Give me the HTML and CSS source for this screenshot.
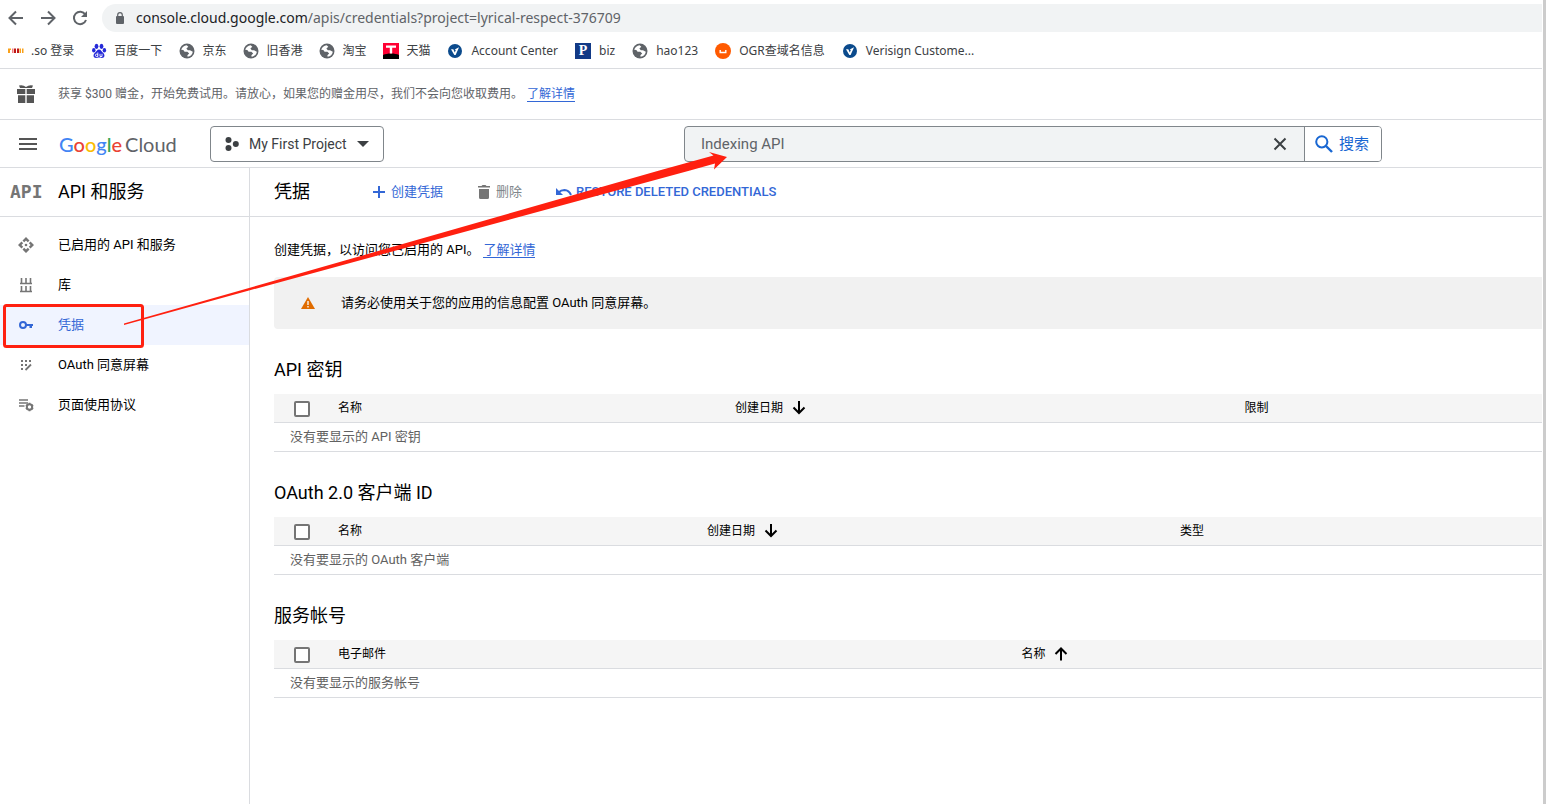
FILE: index.html
```
<!DOCTYPE html>
<html lang="zh-CN">
<head>
<meta charset="utf-8">
<title>凭据 – API 和服务</title>
<link rel="stylesheet" href="styles.css">
</head>
<body>
<svg class="defs" aria-hidden="true">
  <symbol id="globe" viewBox="0 0 16 16">
    <circle cx="8" cy="8" r="7.5" fill="#5f6368"/>
    <path d="M2.200 6.800C3 4.200 5 2.500 7.600 2.200L9.300 3.800 7.400 5.600 8.800 7.200H11L13.800 8.700C13.600 11.200 11.400 13.500 8.600 13.800L8.400 12.200 10.200 10.500 8.400 8.700H5.600L4.300 7z" fill="#fff"/>
    <path d="M9.500 2.400C12 3 13.500 4.800 13.800 7L11.600 6.200 9.700 6 9.200 5.200 10.400 4.100z" fill="#5f6368"/>
  </symbol>
  <symbol id="verisign" viewBox="0 0 16 16">
    <circle cx="8" cy="8" r="7" fill="#0b4a8c"/>
    <path d="M4 6.200H6.300L7.800 9.500 8.800 7 7.700 6.500 12 4.300 11.300 6 8.600 12H7.300z" fill="#fff"/>
  </symbol>
  <symbol id="down" viewBox="0 0 14 14"><path d="M7 0V12M1.500 6.500 7 12 12.500 6.500" fill="none" stroke="#000" stroke-width="2"/></symbol>
  <symbol id="up" viewBox="0 0 14 14"><path d="M7 13.500V2M1.500 7 7 1.500 12.500 7" fill="none" stroke="#000" stroke-width="2"/></symbol>
</svg>
<div class="window">
  <div class="browser">
    <div class="address-row">
      <button class="nav-btn" aria-label="后退"><svg width="16" height="16" viewBox="0 0 16 16"><path d="M15 8H2M8 1.500 1.500 8 8 14.500" fill="none" stroke="#5f6368" stroke-width="2"/></svg></button>
      <button class="nav-btn" aria-label="前进"><svg width="16" height="16" viewBox="0 0 16 16"><path d="M1 8H14M8 1.500 14.500 8 8 14.500" fill="none" stroke="#5f6368" stroke-width="2"/></svg></button>
      <button class="nav-btn" aria-label="重新加载"><svg width="16" height="16" viewBox="0 0 16 16"><path d="M13.300 4.500A6.200 6.200 0 1 0 14 10" fill="none" stroke="#5f6368" stroke-width="2"/><path d="M15 1V7H9z" fill="#5f6368"/></svg></button>
      <div class="omnibox">
        <svg width="10" height="12" viewBox="0 0 10 12"><rect x="1" y="4" width="8" height="8" rx="1" fill="#5f6368"/><path d="M2.700 5V3a2.300 2.300 0 0 1 4.600 0V5" fill="none" stroke="#5f6368" stroke-width="1.200"/></svg>
        <span class="url"><span class="host">console.cloud.google.com</span>/apis/credentials?project=lyrical-respect-376709</span>
      </div>
    </div>
    <nav class="bookmarks" aria-label="书签">
      <a href="#"><svg width="16" height="16" viewBox="0 0 16 16"><path d="M0 5.500H3V7H2V10H0z" fill="#f9a11b"/><path d="M4 5.500H5.500V10H4z" fill="#f08080"/><path d="M6 5.500H8V10H6zM9 5.500H11V10H9z" fill="#c01818"/><path d="M11.500 5.500H13V10H11.500zM14 5.500H15.500V10H14z" fill="#f9a11b"/></svg>.so 登录</a>
      <a href="#"><svg width="16" height="16" viewBox="0 0 16 16" fill="#2529d8"><ellipse cx="5.500" cy="3.300" rx="1.900" ry="2.600"/><ellipse cx="10.500" cy="3.300" rx="1.900" ry="2.600"/><ellipse cx="2.800" cy="7.300" rx="1.700" ry="2.200"/><ellipse cx="13.400" cy="7.300" rx="1.700" ry="2.200"/><path d="M8 6.500C10 6.500 10.500 8.500 12 9.800 14.500 12 13.500 15 11 15 9.500 15 9 14.600 8 14.600S6.500 15 5 15C2.500 15 1.500 12 4 9.800 5.500 8.500 6 6.500 8 6.500z"/><path d="M6.800 9.500V13.500H5.600A1.200 1.200 0 1 1 6.800 12.300M9 10.800V13.500H11V10.800" fill="none" stroke="#fff" stroke-width=".9"/></svg>百度一下</a>
      <a href="#"><svg width="16" height="16"><use href="#globe"/></svg>京东</a>
      <a href="#"><svg width="16" height="16"><use href="#globe"/></svg>旧香港</a>
      <a href="#"><svg width="16" height="16"><use href="#globe"/></svg>淘宝</a>
      <a href="#"><svg width="16" height="16" viewBox="0 0 16 16"><path fill="#ff0033" d="M0 0h16v12H0z"/><path d="M0 12C4 10 12 10 16 12V16H0z"/><path d="M3 2.500H13V4.700H9.200V10.500H6.800V4.700H3z" fill="#fff"/></svg>天猫</a>
      <a href="#"><svg width="16" height="16"><use href="#verisign"/></svg>Account Center</a>
      <a href="#"><span class="fav-p" aria-hidden="true">P</span>biz</a>
      <a href="#"><svg width="16" height="16"><use href="#globe"/></svg>hao123</a>
      <a href="#"><svg width="16" height="16" viewBox="0 0 16 16"><circle cx="8" cy="8" r="8" fill="#ff5a00"/><path d="M5.200 7V9.500H10.800V7" fill="none" stroke="#fff" stroke-width="1.400"/></svg>OGR查域名信息</a>
      <a href="#"><svg width="16" height="16"><use href="#verisign"/></svg>Verisign Custome...</a>
    </nav>
  </div>

  <div class="promo">
    <svg class="promo-icon" width="18" height="18" viewBox="0 0 18 18" fill="#555"><path d="M0 4H8.300V9H0zM9.700 4H18V9H9.700zM1 10.300H8.300V18H1zM9.700 10.300H17V18H9.700z"/><path d="M2 .5Q6 -.5 9 2 12 -.5 16 .5L15 3H3z"/></svg>
    <p>获享 $300 赠金，开始免费试用。请放心，如果您的赠金用尽，我们不会向您收取费用。<a href="#">了解详情</a></p>
  </div>

  <header class="topbar">
    <button class="menu" aria-label="导航菜单"><svg width="18" height="12" viewBox="0 0 18 12"><path d="M0 1H18M0 6H18M0 11H18" stroke="#555" stroke-width="2"/></svg></button>
    <a class="logo" href="#" aria-label="Google Cloud"><span class="google"><span class="b">G</span><span class="r">o</span><span class="y">o</span><span class="b">g</span><span class="g">l</span><span class="r">e</span></span><span>Cloud</span></a>
    <button class="project"><svg width="14" height="14" viewBox="0 0 14 14" fill="#3c4043"><circle cx="3.500" cy="3" r="3"/><circle cx="3.500" cy="11" r="3"/><circle cx="10.800" cy="7" r="3"/></svg><span>My First Project</span><svg width="12" height="6" viewBox="0 0 12 6"><path d="M0 0H12L6 6z" fill="#3c4043"/></svg></button>
    <form class="search">
      <input type="text" value="Indexing API" aria-label="搜索资源">
      <button class="clear" type="button" aria-label="清除"><svg width="14" height="14" viewBox="0 0 14 14"><path d="M1.500 1.500 12.500 12.500M12.500 1.500 1.500 12.500" stroke="#3c4043" stroke-width="2"/></svg></button>
      <button class="go" type="button"><svg width="18" height="18" viewBox="0 0 18 18" fill="none" stroke="#1967d2" stroke-width="2"><circle cx="6.800" cy="6.800" r="5.600"/><path d="M11 11 17 17" stroke-width="2.400"/></svg>搜索</button>
    </form>
  </header>

  <div class="body">
    <aside class="sidebar">
      <div class="side-head"><span class="api-mark" aria-hidden="true">API</span><h2>API 和服务</h2></div>
      <nav class="side-nav">
        <a href="#"><svg width="16" height="16" viewBox="0 0 16 16" fill="#757575"><path d="M8 0 11.500 3.500 9.800 5.200 8 3.400 6.200 5.200 4.500 3.500zM8 16 4.500 12.500 6.200 10.800 8 12.600 9.800 10.800 11.500 12.500zM0 8 3.500 4.500 5.200 6.200 3.400 8 5.200 9.800 3.500 11.500zM16 8 12.500 11.500 10.800 9.800 12.600 8 10.800 6.200 12.500 4.500z"/><circle cx="8" cy="8" r="1.300"/></svg>已启用的 API 和服务</a>
        <a href="#"><svg width="16" height="16" viewBox="0 0 16 16"><path d="M2 6.500H14M2 14.500H14M3.500 1V6M8 1V6M12.500 1V6M3.500 9V14M8 9V14M12.500 9V14" stroke="#757575" stroke-width="1.600"/></svg>库</a>
        <a href="#" class="current" aria-current="page"><svg width="16" height="16" viewBox="0 0 16 16"><circle cx="5" cy="8" r="3" fill="none" stroke="#3367d6" stroke-width="2"/><path d="M8 7H15V9H14V11H11.500V9H8z" fill="#3367d6"/></svg>凭据</a>
        <a href="#"><svg width="16" height="16" viewBox="0 0 16 16"><path d="M3 3h2v2H3zM7 3h2v2H7zM11 3h2v2H11zM3 7h2v2H3zM7 7h2v2H7zM3 11h2v2H3z" fill="#757575"/><path d="M7.500 13 13 7.500" stroke="#757575" stroke-width="1.800"/></svg>OAuth 同意屏幕</a>
        <a href="#"><svg width="16" height="16" viewBox="0 0 16 16"><path d="M1 3H10M1 6H10M1 9H6.500" stroke="#757575" stroke-width="1.400"/><circle cx="11.500" cy="10" r="2.700" fill="none" stroke="#757575" stroke-width="2"/><path d="M11.500 5.800V7.500M11.500 12.500V14.200M7.900 7.900 9.300 8.800M13.700 11.200 15.100 12.100M15.100 7.900 13.700 8.800M9.300 11.200 7.900 12.100" stroke="#757575" stroke-width="1.800"/></svg>页面使用协议</a>
      </nav>
    </aside>

    <main class="main">
      <div class="toolbar">
        <h1>凭据</h1>
        <button class="tool create"><svg width="12" height="12" viewBox="0 0 12 12"><path d="M6 0V12M0 6H12" stroke="#3367d6" stroke-width="2"/></svg>创建凭据</button>
        <button class="tool delete" disabled><svg width="12" height="14" viewBox="0 0 12 14" fill="#757575"><path d="M0 1H3.500L4.500 0H7.500L8.500 1H12V2.600H0zM1 4H11V12.500Q11 14 9.500 14H2.500Q1 14 1 12.500z"/></svg>删除</button>
        <button class="tool restore"><svg width="16" height="12" viewBox="0 0 16 12"><path d="M0 2V9H7z" fill="#3367d6"/><path d="M2.500 6.500Q5 4 8.500 4 13 4.200 15 9" fill="none" stroke="#3367d6" stroke-width="2"/></svg>RESTORE DELETED CREDENTIALS</button>
      </div>
      <div class="content">
        <p class="intro">创建凭据，以访问您已启用的 API。<a href="#">了解详情</a></p>
        <div class="notice"><svg width="14" height="12" viewBox="0 0 14 12"><path d="M7 0 14 12H0z" fill="#e06c00"/><path d="M7 4V8M7 9V10.400" stroke="#fff" stroke-width="1.300"/></svg><span>请务必使用关于您的应用的信息配置 OAuth 同意屏幕。</span></div>

        <section>
          <h3>API 密钥</h3>
          <table class="keys">
            <colgroup><col class="pick"><col class="first"><col class="second"><col></colgroup>
            <thead><tr><th class="check"><input type="checkbox" aria-label="选择所有 API 密钥"></th><th>名称</th><th><span class="sort">创建日期<svg width="14" height="14"><use href="#down"/></svg></span></th><th>限制</th></tr></thead>
            <tbody><tr><td colspan="4">没有要显示的 API 密钥</td></tr></tbody>
          </table>
        </section>
        <section>
          <h3>OAuth 2.0 客户端 ID</h3>
          <table class="clients">
            <colgroup><col class="pick"><col class="first"><col class="second"><col></colgroup>
            <thead><tr><th class="check"><input type="checkbox" aria-label="选择所有客户端"></th><th>名称</th><th><span class="sort">创建日期<svg width="14" height="14"><use href="#down"/></svg></span></th><th>类型</th></tr></thead>
            <tbody><tr><td colspan="4">没有要显示的 OAuth 客户端</td></tr></tbody>
          </table>
        </section>
        <section>
          <h3>服务帐号</h3>
          <table class="accounts">
            <colgroup><col class="pick"><col class="first"><col></colgroup>
            <thead><tr><th class="check"><input type="checkbox" aria-label="选择所有服务帐号"></th><th>电子邮件</th><th><span class="sort">名称<svg width="14" height="14"><use href="#up"/></svg></span></th></tr></thead>
            <tbody><tr><td colspan="3">没有要显示的服务帐号</td></tr></tbody>
          </table>
        </section>
      </div>
    </main>
  </div>
</div>
<svg class="markup" width="740" height="360" viewBox="0 0 740 360" aria-hidden="true">
  <rect x="4.500" y="305.500" width="138" height="41" rx="2" fill="none" stroke="#ff2010" stroke-width="3"/>
  <path d="M124 323.500 249 288 661 170 713.500 155.500 709 152 727 157 714 169.500 715 163.500 690 170.500 249 290.500 124 325z" fill="#ff2010"/>
</svg>
</body>
</html>
```
FILE: styles.css
```
* { box-sizing: border-box; }

body {
  margin: 0;
  background: #fff;
  color: #000;
  font: 13px/20px Roboto, "Noto Sans CJK SC", sans-serif;
}

h1, h2, h3, p { margin: 0; font-weight: 400; }
a { text-decoration: none; color: inherit; }
svg { flex: none; display: block; }

button {
  display: flex;
  align-items: center;
  padding: 0;
  border: 0;
  background: none;
  font: inherit;
  color: inherit;
}

.defs { position: absolute; width: 0; height: 0; }

.window {
  display: flex;
  flex-direction: column;
  min-height: 100vh;
  padding-right: 1px;
  border-right: 3px solid #ccc;
}

/* Browser chrome */
.browser {
  padding-top: 4px;
  border-bottom: 1px solid #dadce0;
}

.address-row {
  display: flex;
  align-items: center;
  gap: 16px;
  padding-left: 8px;
}

.omnibox {
  flex: 1;
  display: flex;
  align-items: center;
  gap: 11px;
  height: 28px;
  margin-left: -2px;
  padding-left: 13px;
  border-radius: 14px 0 0 14px;
  background: #f1f3f4;
}

.url {
  font: 14px/20px "Noto Sans", sans-serif;
  color: #5f6368;
  white-space: nowrap;
}

.host { color: #202124; }

.bookmarks {
  display: flex;
  align-items: center;
  gap: 17px;
  height: 36px;
  padding: 1px 0 0 8px;
  font: 12px/16px "Noto Sans", "Noto Sans CJK SC", sans-serif;
  color: #3c4043;
  white-space: nowrap;
}

.bookmarks a {
  display: flex;
  align-items: center;
  gap: 7px;
}

.fav-p {
  width: 16px;
  height: 16px;
  background: #123a86;
  color: #fff;
  font: bold 14px/16px "Liberation Serif", serif;
  text-align: center;
}

.bookmarks a:nth-child(n + 7) { gap: 8px; }

/* Promotion */
.promo {
  display: flex;
  align-items: center;
  gap: 23px;
  height: 51px;
  padding-left: 17px;
  border-bottom: 1px solid #dadce0;
  color: #5f6368;
  font-size: 12px;
}

.promo a, .intro a {
  margin-left: 4px;
  border-bottom: 1px solid #3367d6;
  color: #3367d6;
}

/* Console header */
.topbar {
  display: flex;
  align-items: center;
  height: 48px;
  padding-left: 19px;
  border-bottom: 1px solid #dadce0;
}

.logo {
  display: flex;
  gap: 3px;
  width: 151px;
  margin-left: 22px;
  font: 20px/28px Lato, sans-serif;
  color: #5f6368;
}

.google { font-weight: 500; }
.b { color: #4285f4; }
.r { color: #ea4335; }
.y { color: #fbbc04; }
.g { color: #34a853; }

.project {
  gap: 10px;
  width: 174px;
  height: 36px;
  padding-left: 14px;
  border: 1px solid #80868b;
  border-radius: 4px;
  font-size: 14px;
  color: #3c4043;
}

.search {
  flex: 0 1 698px;
  display: flex;
  height: 36px;
  margin-left: 300px;
  border: 1px solid #80868b;
  border-radius: 4px;
  overflow: hidden;
  background: #f1f3f4;
}

.search input {
  flex: 1;
  min-width: 0;
  padding: 0 16px;
  border: 0;
  background: none;
  font: 15px/20px Roboto, sans-serif;
  color: #5f6368;
}

.clear { padding: 0 17px; }

.go {
  gap: 6px;
  width: 77px;
  padding-left: 10px;
  border-left: 1px solid #80868b;
  background: #fff;
  font-size: 15px;
  color: #1967d2;
}

/* Body */
.body { flex: 1; display: flex; }

.sidebar {
  flex: none;
  width: 250px;
  border-right: 1px solid #dadce0;
}

.side-head, .toolbar {
  display: flex;
  align-items: center;
  height: 49px;
  border-bottom: 1px solid #dadce0;
}

.side-head { padding-left: 10px; }
.side-head h2, .toolbar h1, h3 { font-size: 18px; line-height: 24px; }

.api-mark {
  width: 48px;
  font: bold 18px/24px "DejaVu Sans Mono", monospace;
  color: #757575;
}

.side-nav { padding-top: 8px; }

.side-nav a {
  display: flex;
  align-items: center;
  gap: 24px;
  height: 40px;
  padding-left: 18px;
}

.side-nav .current { background: #f0f4ff; color: #3367d6; }

.main { flex: 1; min-width: 0; }
.toolbar { padding-left: 24px; }
.tool { gap: 6px; color: #3367d6; white-space: nowrap; }
.create { margin-left: 63px; }
.delete { margin-left: 35px; color: #80868b; }
.restore { gap: 4px; margin-left: 34px; font-weight: 500; }

.content { padding: 23px 0 24px 24px; }

.notice {
  display: flex;
  align-items: center;
  gap: 26px;
  height: 52px;
  margin-top: 17px;
  padding-left: 27px;
  border-radius: 4px 0 0 4px;
  background: #f1f1f1;
}

section { margin-top: 29px; }

table {
  width: 100%;
  margin-top: 12px;
  border-collapse: separate;
  border-spacing: 0;
  table-layout: fixed;
  font-size: 12px;
  line-height: 20px;
}

th, td {
  height: 29px;
  padding: 0 16px;
  border-bottom: 1px solid #dadce0;
  text-align: left;
  font-weight: 400;
}

th { background: #f5f5f5; }
td { font-size: 13px; color: #616161; }
.check { padding: 1px 0 0 20px; }

.check input {
  appearance: none;
  display: block;
  width: 16px;
  height: 16px;
  margin: 0;
  border: 2px solid #757575;
  border-radius: 2px;
  background: #fff;
}

.sort { display: flex; align-items: center; gap: 9px; }

.pick { width: 48px; }
.keys .first { width: 31.3%; }
.keys .second { width: 40.2%; }
.clients .first { width: 29.1%; }
.clients .second { width: 37.3%; }
.accounts .first { width: 53.9%; }

/* Red annotation over the page */
.markup {
  position: absolute;
  top: 0;
  left: 0;
  pointer-events: none;
}
```
